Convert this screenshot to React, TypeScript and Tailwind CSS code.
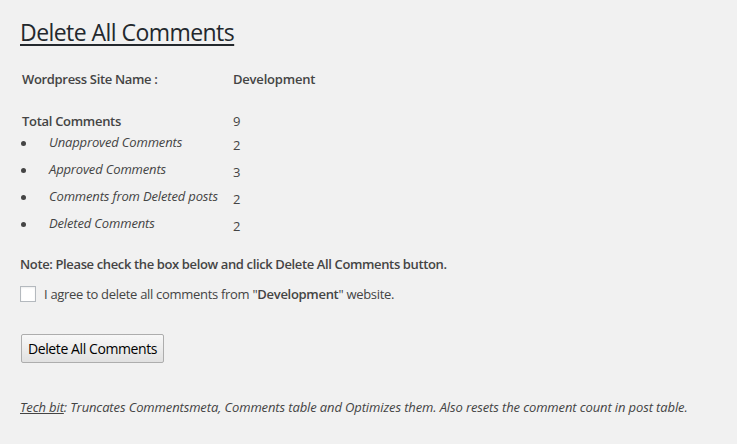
import React from "react";

export default function App() {
  const sub = [
    ["Unapproved Comments", "2"],
    ["Approved Comments", "3"],
    ["Comments from Deleted posts", "2"],
    ["Deleted Comments", "2"],
  ];
  return (
    <div className="min-h-[444px] w-full bg-[#f1f1f1] text-[#444] font-['Open_Sans',sans-serif] text-[13px] pl-5 pt-[18px]">
      <h1 className="text-[23px] leading-[29px] text-[#23282d] underline decoration-2 underline-offset-[3px] font-normal tracking-[-0.55px]">
        Delete All Comments
      </h1>
      <div className="mt-[22px] grid grid-cols-[213px_1fr]">
        <div className="pl-[2px] font-semibold h-[20px] leading-[20px] tracking-[-0.33px]">Wordpress Site Name :</div>
        <div className="font-semibold h-[20px] leading-[20px] tracking-[-0.2px]">Development</div>
      </div>
      <div className="mt-[22px] grid grid-cols-[213px_1fr]">
        <div className="pl-[2px] font-semibold leading-[20px] tracking-[-0.3px]">Total Comments</div>
        <div className="leading-[20px]">9</div>
      </div>
      <div className="mt-[1px] flex flex-col">
        {sub.map(([label, v]) => (
          <div key={label} className="grid grid-cols-[213px_1fr] h-[27px]">
            <div className="flex items-start">
              <span className="w-[29px] h-[20px] flex items-center pl-[1px] pt-[3px]">
                <span className="w-[5px] h-[5px] rounded-full bg-[#444]"></span>
              </span>
              <span className="italic leading-[20px] tracking-[-0.15px]">{label}</span>
            </div>
            <div className="leading-[20px] pt-[3px]">{v}</div>
          </div>
        ))}
      </div>
      <p className="mt-[14px] font-semibold leading-[20px] tracking-[-0.37px]">
        Note: Please check the box below and click Delete All Comments button.
      </p>
      <label className="mt-[10px] flex items-center">
        <span className="w-4 h-4 border border-[#b4b9be] bg-white shadow-[inset_0_1px_2px_rgba(0,0,0,0.07)]"></span>
        <span className="ml-[8px] leading-[20px] tracking-[-0.3px]">
          I agree to delete all comments from "<b className="font-semibold">Development</b>" website.
        </span>
      </label>
      <button className="mt-[30px] ml-[1px] h-[29px] px-[6px] border border-[#adadad] rounded-[2px] bg-gradient-to-b from-[#f8f8f8] to-[#e1e1e1] text-[14px] text-black leading-[20px] tracking-[-0.4px]">
        Delete All Comments
      </button>
      <p className="mt-[34px] italic leading-[20px] tracking-[-0.12px]">
        <span className="underline">Tech bit</span>: Truncates Commentsmeta, Comments table and Optimizes them. Also resets the comment count in post table.
      </p>
    </div>
  );
}
